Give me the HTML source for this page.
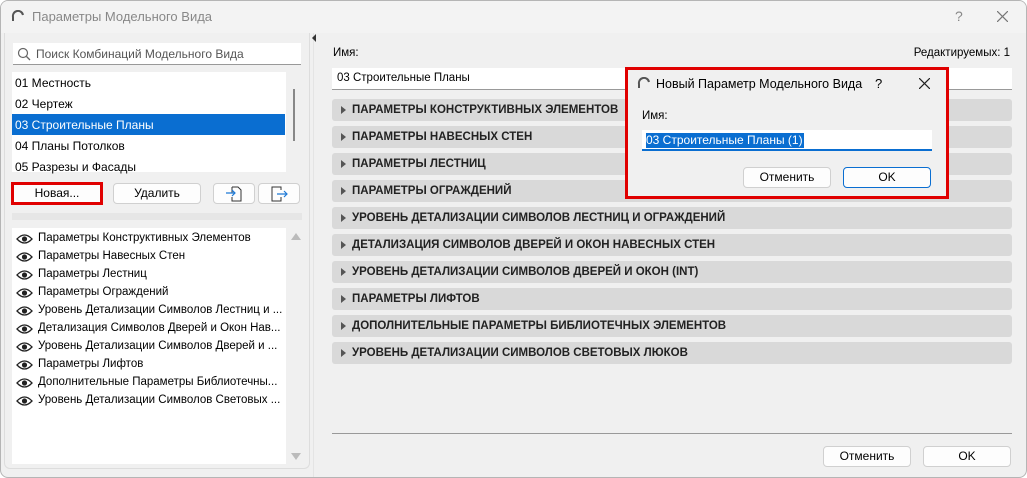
<!DOCTYPE html>
<html><head><meta charset="utf-8"><style>
*{box-sizing:border-box;margin:0;padding:0}
body{width:1027px;height:478px;background:#fff;font-family:"Liberation Sans","DejaVu Sans",sans-serif;font-size:12px;color:#000;position:relative;overflow:hidden}
.win{position:absolute;left:0;top:0;width:1027px;height:478px;background:#f0f0f0;border:1px solid #b5b5b5;border-radius:8px;overflow:hidden}
.title{position:absolute;left:0;top:0;width:100%;height:32px;background:#f3f3f3}
.a{position:absolute}
.btn{position:absolute;background:#fdfdfd;border:1px solid #d0d0d0;border-radius:4px;text-align:center;line-height:19px;font-size:12px}
.bar{position:absolute;left:331px;width:680px;height:22px;background:#d9d9d9;border-radius:3px;font-weight:bold;font-size:11.5px;line-height:22px;padding-left:20px;color:#222}
.bar:before{content:"";position:absolute;left:9px;top:7px;border-left:5px solid #555;border-top:4px solid transparent;border-bottom:4px solid transparent}
.row{position:absolute;left:14px;font-size:12px}
.lrow{position:absolute;left:37px;font-size:11.5px}
.eye{position:absolute;left:15px;width:17px;height:10px}
</style></head><body>
<div class="win">
<div class="title"></div>
<svg class="a" style="left:10px;top:9px" width="14" height="12"><path d="M2 11 V7 A5 5 0 0 1 12 5" fill="none" stroke="#555" stroke-width="2"/></svg>
<div class="a" style="left:31px;top:8px;font-size:13px;color:#888">Параметры Модельного Вида</div>
<div class="a" style="left:954px;top:7px;font-size:14px;color:#888">?</div>
<svg class="a" style="left:996px;top:10px" width="11" height="11"><path d="M0 0L11 11M11 0L0 11" stroke="#777" stroke-width="1.2"/></svg>

<div class="a" style="left:3px;top:32px;width:306px;height:436px;border:1px solid #ddd;border-top:none;border-radius:0 0 6px 6px"></div>
<div class="a" style="left:312px;top:32px;width:1px;height:446px;background:#e4e4e4"></div>
<div class="a" style="left:311px;top:33px;border-right:4px solid #333;border-top:4px solid transparent;border-bottom:4px solid transparent"></div>

<div class="a" style="left:12px;top:42px;width:288px;height:22px;background:#fff;border-bottom:1px solid #999"></div>
<svg class="a" style="left:16px;top:46px" width="14" height="14"><circle cx="6" cy="6" r="4.5" fill="none" stroke="#666" stroke-width="1.2"/><path d="M9.5 9.5L13 13" stroke="#666" stroke-width="1.3"/></svg>
<div class="a" style="left:35px;top:46px;color:#555;font-size:12px">Поиск Комбинаций Модельного Вида</div>

<div class="a" style="left:11px;top:71px;width:274px;height:100px;background:#fff"></div>
<div class="a" style="left:11px;top:113px;width:273px;height:21px;background:#0a6ed1"></div>
<div class="row" style="top:75px">01 Местность</div>
<div class="row" style="top:96px">02 Чертеж</div>
<div class="row" style="top:117px;color:#fff">03 Строительные Планы</div>
<div class="row" style="top:138px">04 Планы Потолков</div>
<div class="row" style="top:159px">05 Разрезы и Фасады</div>
<div class="a" style="left:292px;top:88px;width:2px;height:52px;background:#888"></div>

<div class="btn" style="left:10px;top:181px;width:92px;height:23px;border:3px solid #e00000;border-radius:0;line-height:17px">Новая...</div>
<div class="btn" style="left:112px;top:182px;width:88px;height:21px">Удалить</div>
<div class="btn" style="left:212px;top:182px;width:42px;height:21px"><svg width="20" height="18" style="margin-top:1px"><path d="M8 2h6l3 3v11H8v-4M8 8v-6" fill="none" stroke="#333"/><path d="M2 8h9M8 5l3 3-3 3" fill="none" stroke="#1e7ad6" stroke-width="1.2"/></svg></div>
<div class="btn" style="left:257px;top:182px;width:42px;height:21px"><svg width="22" height="18" style="margin-top:1px"><path d="M13 5V2H4v14h9v-4" fill="none" stroke="#333"/><path d="M9 9h10M16 6l3 3-3 3" fill="none" stroke="#1e7ad6" stroke-width="1.2"/></svg></div>

<div class="a" style="left:11px;top:212px;width:290px;height:7px;background:#e6e6e6"></div>

<div class="a" style="left:11px;top:227px;width:274px;height:236px;background:#fff"></div>
<div class="a" style="left:290px;top:232px;border-bottom:7px solid #bbb;border-left:5px solid transparent;border-right:5px solid transparent"></div>
<div class="a" style="left:290px;top:452px;border-top:7px solid #bbb;border-left:5px solid transparent;border-right:5px solid transparent"></div>
<div id="eyes"></div>

<div class="a" style="left:332px;top:46px;font-size:11.5px">Имя:</div>
<div class="a" style="right:16px;top:46px;font-size:11.5px">Редактируемых: 1</div>
<div class="a" style="left:331px;top:67px;width:680px;height:22px;background:#fff;border-bottom:1px solid #999;padding:4px 5px;font-size:11.5px">03 Строительные Планы</div>

<div class="bar" style="top:98px">ПАРАМЕТРЫ КОНСТРУКТИВНЫХ ЭЛЕМЕНТОВ</div>
<div class="bar" style="top:125px">ПАРАМЕТРЫ НАВЕСНЫХ СТЕН</div>
<div class="bar" style="top:152px">ПАРАМЕТРЫ ЛЕСТНИЦ</div>
<div class="bar" style="top:179px">ПАРАМЕТРЫ ОГРАЖДЕНИЙ</div>
<div class="bar" style="top:206px">УРОВЕНЬ ДЕТАЛИЗАЦИИ СИМВОЛОВ ЛЕСТНИЦ И ОГРАЖДЕНИЙ</div>
<div class="bar" style="top:233px">ДЕТАЛИЗАЦИЯ СИМВОЛОВ ДВЕРЕЙ И ОКОН НАВЕСНЫХ СТЕН</div>
<div class="bar" style="top:260px">УРОВЕНЬ ДЕТАЛИЗАЦИИ СИМВОЛОВ ДВЕРЕЙ И ОКОН (INT)</div>
<div class="bar" style="top:287px">ПАРАМЕТРЫ ЛИФТОВ</div>
<div class="bar" style="top:314px">ДОПОЛНИТЕЛЬНЫЕ ПАРАМЕТРЫ БИБЛИОТЕЧНЫХ ЭЛЕМЕНТОВ</div>
<div class="bar" style="top:341px">УРОВЕНЬ ДЕТАЛИЗАЦИИ СИМВОЛОВ СВЕТОВЫХ ЛЮКОВ</div>

<div class="a" style="left:331px;top:432px;width:680px;height:1px;background:#999"></div>
<div class="btn" style="left:822px;top:445px;width:88px;height:21px">Отменить</div>
<div class="btn" style="left:922px;top:445px;width:88px;height:21px">OK</div>

<!-- modal -->
<div class="a" style="left:624px;top:66px;width:324px;height:132px;background:#f0f0f0;border:3px solid #e00000"></div>
<svg class="a" style="left:636px;top:76px" width="14" height="12"><path d="M2 11 V7 A5 5 0 0 1 12 5" fill="none" stroke="#555" stroke-width="2"/></svg>
<div class="a" style="left:655px;top:76px;font-size:12.5px">Новый Параметр Модельного Вида</div>
<div class="a" style="left:874px;top:75px;font-size:13px">?</div>
<svg class="a" style="left:918px;top:77px" width="11" height="11"><path d="M0 0L11 11M11 0L0 11" stroke="#222" stroke-width="1.2"/></svg>
<div class="a" style="left:641px;top:109px;font-size:11.5px">Имя:</div>
<div class="a" style="left:641px;top:129px;width:290px;height:21px;background:#fff;border-bottom:2px solid #0a6ed1"></div>
<div class="a" style="left:645px;top:132px;background:#0a6ed1;color:#fff;font-size:12px;line-height:15px;padding-right:1px">03 Строительные Планы (1)</div>
<div class="btn" style="left:742px;top:166px;width:88px;height:21px">Отменить</div>
<div class="btn" style="left:842px;top:166px;width:88px;height:21px;border-color:#0a6ed1">OK</div>
</div>
<script>
var t=["Параметры Конструктивных Элементов","Параметры Навесных Стен","Параметры Лестниц","Параметры Ограждений","Уровень Детализации Символов Лестниц и ...","Детализация Символов Дверей и Окон Нав...","Уровень Детализации Символов Дверей и ...","Параметры Лифтов","Дополнительные Параметры Библиотечны...","Уровень Детализации Символов Световых ..."];
var h="";t.forEach(function(s,i){var y=231+i*18;h+='<svg class="eye" style="top:'+(y+2)+'px" viewBox="0 0 17 10"><path d="M1 5Q8.5 -3 16 5Q8.5 13 1 5Z" fill="none" stroke="#222" stroke-width="1.3"/><circle cx="8.5" cy="5" r="2.6" fill="#222"/></svg><div class="lrow" style="top:'+y+'px">'+s+'</div>';});
document.getElementById("eyes").outerHTML=h;
</script>
</body></html>
